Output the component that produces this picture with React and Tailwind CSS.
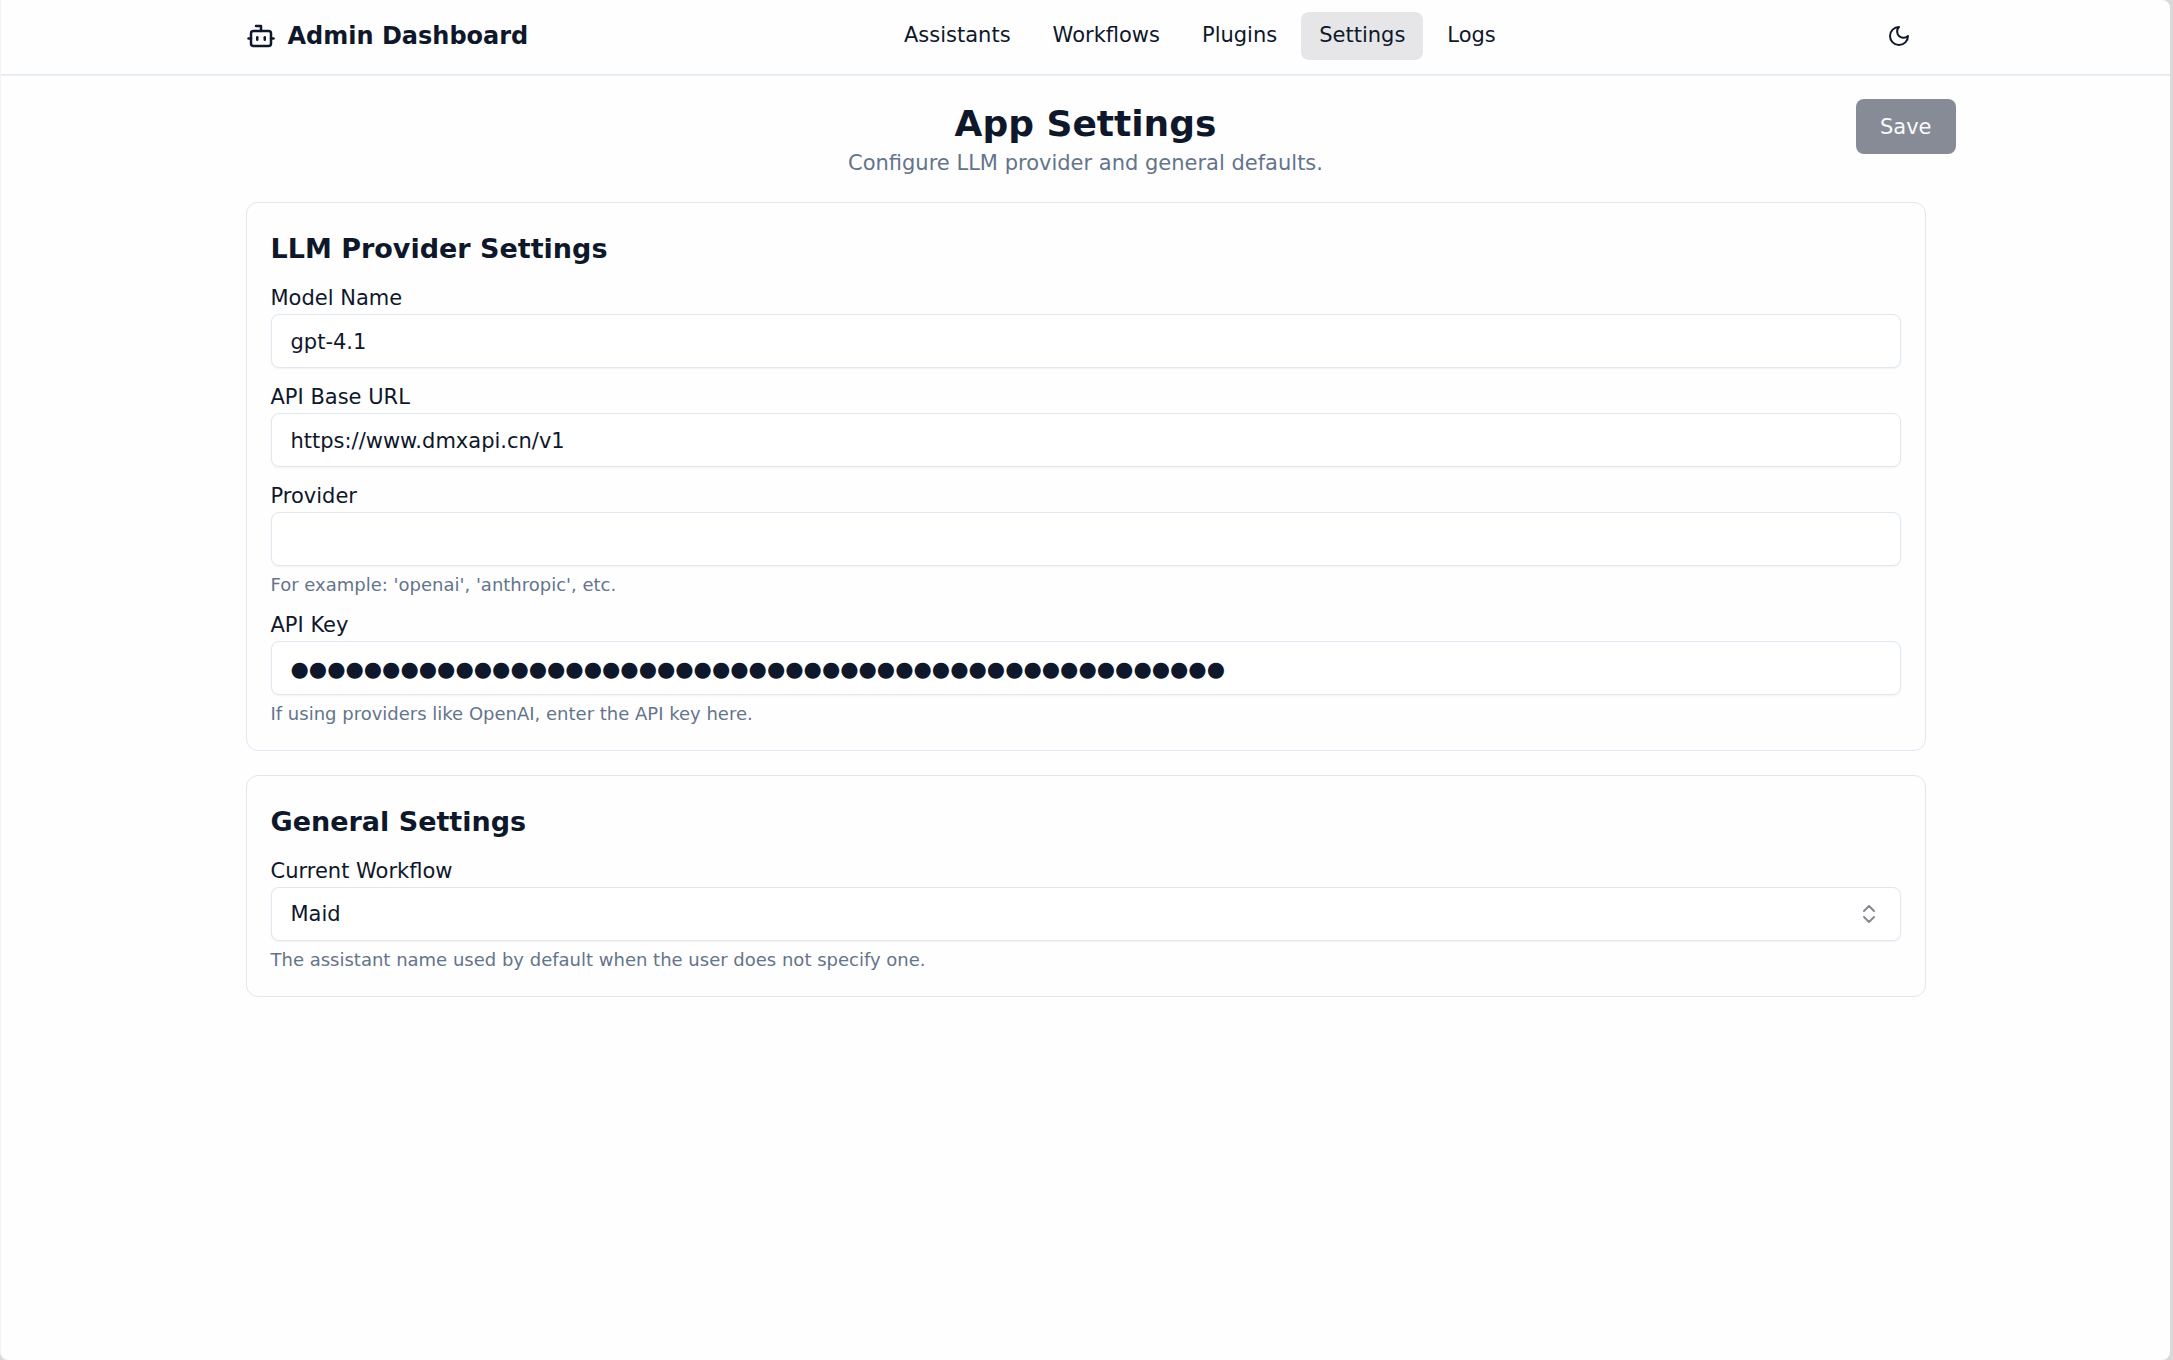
import { useState } from "react";
import { Bot, ChevronsUpDown } from "lucide-react";

const NAV_ITEMS = ["Assistants", "Workflows", "Plugins", "Settings", "Logs"];

function MoonIcon() {
  return (
    <svg viewBox="0 0 24 24" className="size-6" fill="none" stroke="currentColor" strokeWidth="2" strokeLinecap="round" strokeLinejoin="round" aria-hidden="true">
      <path d="M12 3a6 6 0 0 0 9 9 9 9 0 1 1-9-9Z" />
    </svg>
  );
}

function Header() {
  return (
    <header className="border-b border-[#dfe7f1] pt-3 pb-3.5 shadow-[0_1px_0_#edf1f6]">
      <div className="mx-auto flex max-w-[1680px] items-center justify-between">
        <div className="flex items-center gap-3">
          <Bot className="size-[30px]" aria-hidden="true" />
          <span className="text-2xl font-bold">Admin Dashboard</span>
        </div>
        <nav className="flex gap-1.5">
          {NAV_ITEMS.map((item) => (
            <a
              key={item}
              href={"#" + item.toLowerCase()}
              aria-current={item === "Settings" ? "page" : undefined}
              className="flex h-12 items-center rounded-lg px-[18px] aria-[current=page]:bg-[#e6e6e9]"
            >
              {item}
            </a>
          ))}
        </nav>
        <button type="button" aria-label="Toggle theme" className="flex h-12 w-[54px] items-center justify-center rounded-lg">
          <MoonIcon />
        </button>
      </div>
    </header>
  );
}

function Card({ title, children }) {
  return (
    <section className="rounded-xl border border-[#dfe7f1] px-6 pt-6 pb-[25px]">
      <h2 className="mb-[15px] text-[27px] leading-[44px] font-bold">{title}</h2>
      <div className="flex flex-col gap-[17px]">{children}</div>
    </section>
  );
}

function Field({ id, label, hint, children }) {
  return (
    <div className="flex flex-col">
      <label htmlFor={id} className="mb-1 leading-6">{label}</label>
      {children}
      {hint && <p className="mt-[7px] text-lg leading-[23px] text-[#64748b]">{hint}</p>}
    </div>
  );
}

const CONTROL = "h-[54px] w-full rounded-lg border border-[#dfe7f1] bg-white px-[19px] pt-0.5 shadow-xs outline-none focus:border-slate-400";

function TextField({ id, label, hint, initial = "" }) {
  const [value, setValue] = useState(initial);
  return (
    <Field id={id} label={label} hint={hint}>
      <input id={id} type="text" autoComplete="off" value={value} onChange={(e) => setValue(e.target.value)} className={CONTROL} />
    </Field>
  );
}

export default function App() {
  return (
    <div className="min-h-screen bg-[#d9d9d9] pr-[3px]">
      <div className="min-h-screen rounded-lg rounded-tl-none border-l border-[#f3f3f3] bg-[#fefefe] font-['DejaVu_Sans',sans-serif] text-[21px] text-[#0f172a]">
        <Header />
        <main className="pt-6 pb-6">
          <div className="mx-auto grid max-w-[1740px] grid-cols-[1fr_auto_1fr] items-start">
            <div className="col-start-2 pt-px text-center">
              <h1 className="text-4xl leading-[48px] font-bold">App Settings</h1>
              <p className="leading-[30px] text-[#64748b]">Configure LLM provider and general defaults.</p>
            </div>
            <button type="button" disabled className="h-[55px] justify-self-end rounded-lg bg-[#878b95] px-6 pt-0.5 text-slate-50">
              Save
            </button>
          </div>
          <form className="mx-auto mt-6 flex max-w-[1680px] flex-col gap-6">
            <Card title="LLM Provider Settings">
              <TextField id="model" label="Model Name" initial="gpt-4.1" />
              <TextField id="base-url" label="API Base URL" initial="https://www.dmxapi.cn/v1" />
              <TextField id="provider" label="Provider" hint="For example: 'openai', 'anthropic', etc." />
              <TextField id="api-key" label="API Key" hint="If using providers like OpenAI, enter the API key here." initial={"●".repeat(51)} />
            </Card>
            <Card title="General Settings">
              <Field id="workflow" label="Current Workflow" hint="The assistant name used by default when the user does not specify one.">
                <div className="relative">
                  <select id="workflow" defaultValue="Maid" className={CONTROL + " appearance-none"}>
                    <option>Maid</option>
                  </select>
                  <ChevronsUpDown className="pointer-events-none absolute inset-y-0 right-5 my-auto size-6 opacity-50" aria-hidden="true" />
                </div>
              </Field>
            </Card>
          </form>
        </main>
      </div>
    </div>
  );
}
